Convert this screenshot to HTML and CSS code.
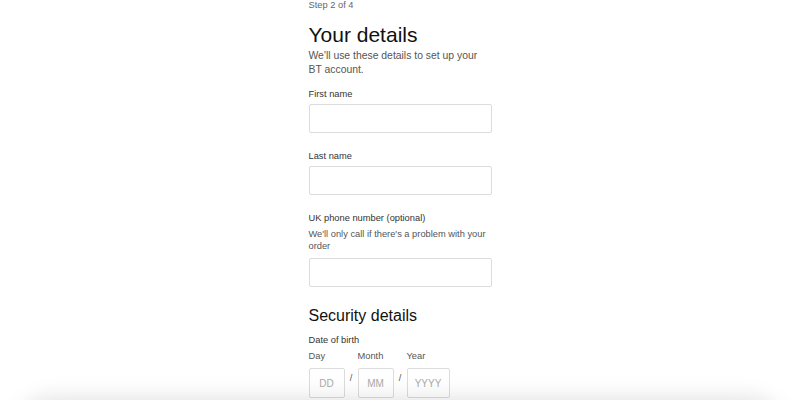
FILE: index.html
```html
<!DOCTYPE html>
<html lang="en">
<head>
    <meta charset="UTF-8">
    <meta name="viewport" content="width=device-width, initial-scale=1.0">
    <title>Your details</title>
    <link rel="stylesheet" href="styles.css">
</head>
<body>
    <div class="page">
        <p class="step">Step 2 of 4</p>
        <h1>Your details</h1>
        <p class="intro">We'll use these details to set up your BT account.</p>

        <div class="field">
            <label for="firstName">First name</label>
            <input type="text" id="firstName">
        </div>

        <div class="field">
            <label for="lastName">Last name</label>
            <input type="text" id="lastName">
        </div>

        <div class="field">
            <label for="phone">UK phone number (optional)</label>
            <p class="hint">We'll only call if there's a problem with your order</p>
            <input type="text" id="phone">
        </div>

        <h2>Security details</h2>
        <div class="dob">
            <p class="dob-title">Date of birth</p>
            <div class="dob-row">
                <div class="dob-part">
                    <span class="dob-label">Day</span>
                    <input type="text" class="dob-day" placeholder="DD">
                </div>
                <span class="slash">/</span>
                <div class="dob-part">
                    <span class="dob-label">Month</span>
                    <input type="text" class="dob-month" placeholder="MM">
                </div>
                <span class="slash">/</span>
                <div class="dob-part">
                    <span class="dob-label">Year</span>
                    <input type="text" class="dob-year" placeholder="YYYY">
                </div>
            </div>
        </div>
    </div>

    <div class="footer-bar"></div>
</body>
</html>
```

FILE: styles.css
```css
body {
    margin: 0;
    background-color: #fff;
    font-family: 'Liberation Sans', Arial, sans-serif;
    color: #333;
    overflow: hidden;
}
.page {
    width: 183px;
    margin: 0 auto;
}
.step {
    margin: -1px 0 0;
    font-size: 9.3px;
    line-height: 12px;
    color: #666;
}
h1 {
    margin: 11px 0 0;
    font-size: 21px;
    font-weight: normal;
    line-height: 25px;
    color: #111;
}
.intro {
    margin: 2px 0 0;
    font-size: 10.4px;
    line-height: 14px;
    color: #555;
}
.field {
    margin-top: 11px;
}
.field + .field {
    margin-top: 17px;
}
label,
.dob-title {
    display: block;
    margin: 0 0 4px;
    font-size: 9.3px;
    line-height: 12px;
    color: #333;
}
.hint {
    margin: 0 0 6px;
    font-size: 9.3px;
    line-height: 12px;
    color: #555;
}
input {
    box-sizing: border-box;
    display: block;
    width: 183px;
    height: 29px;
    margin: 0;
    border: 1px solid #dcdcdc;
    border-radius: 2px;
    background-color: #fff;
    font-family: inherit;
    font-size: 10px;
    color: #333;
}
input::placeholder {
    color: #aaa;
}
h2 {
    margin: 19px 0 0;
    font-size: 16px;
    font-weight: normal;
    line-height: 20px;
    color: #111;
}
.dob-title {
    margin: 8px 0 0;
}
.dob-row {
    display: flex;
    align-items: flex-end;
    margin-top: 4px;
}
.dob-part {
    display: flex;
    flex-direction: column;
}
.dob-label {
    font-size: 9.3px;
    line-height: 12px;
    color: #555;
    margin-bottom: 6px;
}
.dob-row input {
    text-align: center;
    height: 30px;
}
.dob-day,
.dob-month {
    width: 36px;
}
.dob-year {
    width: 43px;
}
.slash {
    align-self: flex-end;
    width: 13px;
    margin-bottom: 15px;
    text-align: center;
    font-size: 9.3px;
    color: #555;
}
.footer-bar {
    position: fixed;
    left: 20px;
    right: 20px;
    bottom: -60px;
    height: 60px;
    border-radius: 30px;
    background-color: #fff;
    box-shadow: 0 0 24px rgba(0, 0, 0, 0.14);
}
```
